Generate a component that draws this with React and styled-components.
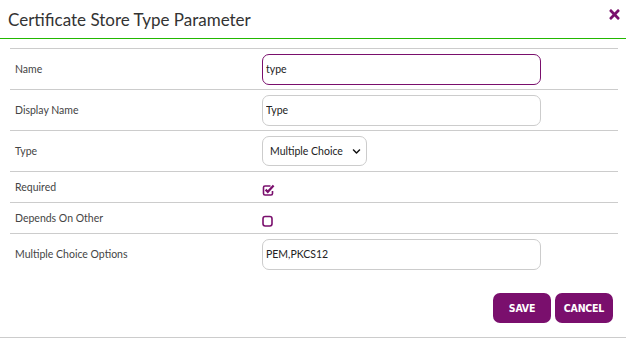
import React from 'react'
import styled, { createGlobalStyle } from 'styled-components'
import { FaTimes, FaChevronDown } from 'react-icons/fa'

const purple = '#7a0f6d'

const GlobalStyle = createGlobalStyle`
body{
    margin:0;
    background:#fff;
    font-family:Lato,"Open Sans",Arial,sans-serif;
}
`

const Modal = styled.div`
width:626px;
height:338px;
background:#fff;
overflow:hidden;
`

const Header = styled.div`
display:flex;
align-items:center;
justify-content:space-between;
height:38px;
padding:0 4px 0 8px;
border-bottom:1px solid #22b800;
`

const Title = styled.h4`
margin:0;
font-size:17px;
font-weight:400;
color:#333;
`

const Close = styled.span`
display:flex;
color:${purple};
margin-top:-10px;
`

const Body = styled.div`
padding:9px 8px 14px 10px;
`

const Table = styled.div`
border-top:1px solid #ccc;
`

const Row = styled.div`
display:grid;
grid-template-columns:247px 1fr;
align-items:center;
min-height:${p => p.$short ? '30px' : '40px'};
border-bottom:${p => p.$last ? 'none' : '1px solid #ccc'};
`

const Label = styled.span`
padding-left:5px;
font-size:10.5px;
color:#444;
`

const Cell = styled.div`
display:flex;
align-items:center;
padding:${p => p.$icon ? '5px 5px 0' : '0 5px'};
`

const TextInput = styled.input`
box-sizing:border-box;
width:279px;
height:31px;
padding:0 3px;
border:1px solid ${p => p.$focused ? purple : '#ccc'};
border-radius:7px;
font-family:inherit;
font-size:10.5px;
color:#222;
outline:none;
`

const SelectWrap = styled.div`
position:relative;
display:inline-flex;
`

const Select = styled.select`
box-sizing:border-box;
appearance:none;
width:105px;
height:30px;
padding:0 18px 0 7px;
border:1px solid #ccc;
border-radius:7px;
background:#fff;
font-family:inherit;
font-size:10.5px;
color:#222;
`

const Chevron = styled.span`
position:absolute;
right:6px;
top:11px;
display:flex;
color:#111;
pointer-events:none;
`

const Actions = styled.div`
display:flex;
justify-content:flex-end;
gap:4px;
padding:19px 5px 0 0;
`

const Button = styled.button`
width:58px;
height:30px;
border:none;
border-radius:7px;
background:${purple};
color:#fff;
font-family:"Liberation Sans Narrow","DejaVu Sans Condensed",sans-serif;
font-stretch:condensed;
font-weight:700;
font-size:10.5px;
letter-spacing:-0.2px;
text-transform:uppercase;
`

const Footer = styled.div`
border-top:1px solid #ccc;
`

const CheckedIcon = () => (
    <svg width="13" height="13" viewBox="0 0 13 13" fill="none">
        <path d="M8.5 3H3Q1.5 3 1.5 4.5V10.5Q1.5 12 3 12H9Q10.5 12 10.5 10.5V8"
            stroke={purple} strokeWidth="1.6" />
        <path d="M3.6 6.6L5.8 8.8L11.6 2.6" stroke={purple} strokeWidth="2.2" />
    </svg>
)

const EmptyIcon = () => (
    <svg width="11" height="12" viewBox="0 0 11 12" fill="none">
        <rect x="1" y="1.5" width="9" height="9.5" rx="2.2" stroke={purple} strokeWidth="1.6" />
    </svg>
)

function App() {
    return (
        <React.Fragment>
            <GlobalStyle />
            <Modal>
                <Header>
                    <Title>Certificate Store Type Parameter</Title>
                    <Close><FaTimes size={15} /></Close>
                </Header>
                <Body>
                    <Table>
                        <Row>
                            <Label>Name</Label>
                            <Cell><TextInput $focused defaultValue="type" /></Cell>
                        </Row>
                        <Row>
                            <Label>Display Name</Label>
                            <Cell><TextInput defaultValue="Type" /></Cell>
                        </Row>
                        <Row>
                            <Label>Type</Label>
                            <Cell>
                                <SelectWrap>
                                    <Select defaultValue="mc">
                                        <option value="mc">Multiple Choice</option>
                                    </Select>
                                    <Chevron><FaChevronDown size={9} /></Chevron>
                                </SelectWrap>
                            </Cell>
                        </Row>
                        <Row $short>
                            <Label>Required</Label>
                            <Cell $icon><CheckedIcon /></Cell>
                        </Row>
                        <Row $short>
                            <Label>Depends On Other</Label>
                            <Cell $icon><EmptyIcon /></Cell>
                        </Row>
                        <Row $last>
                            <Label>Multiple Choice Options</Label>
                            <Cell><TextInput defaultValue="PEM,PKCS12" /></Cell>
                        </Row>
                    </Table>
                    <Actions>
                        <Button>Save</Button>
                        <Button>Cancel</Button>
                    </Actions>
                </Body>
                <Footer />
            </Modal>
        </React.Fragment>
    )
}

export default App
